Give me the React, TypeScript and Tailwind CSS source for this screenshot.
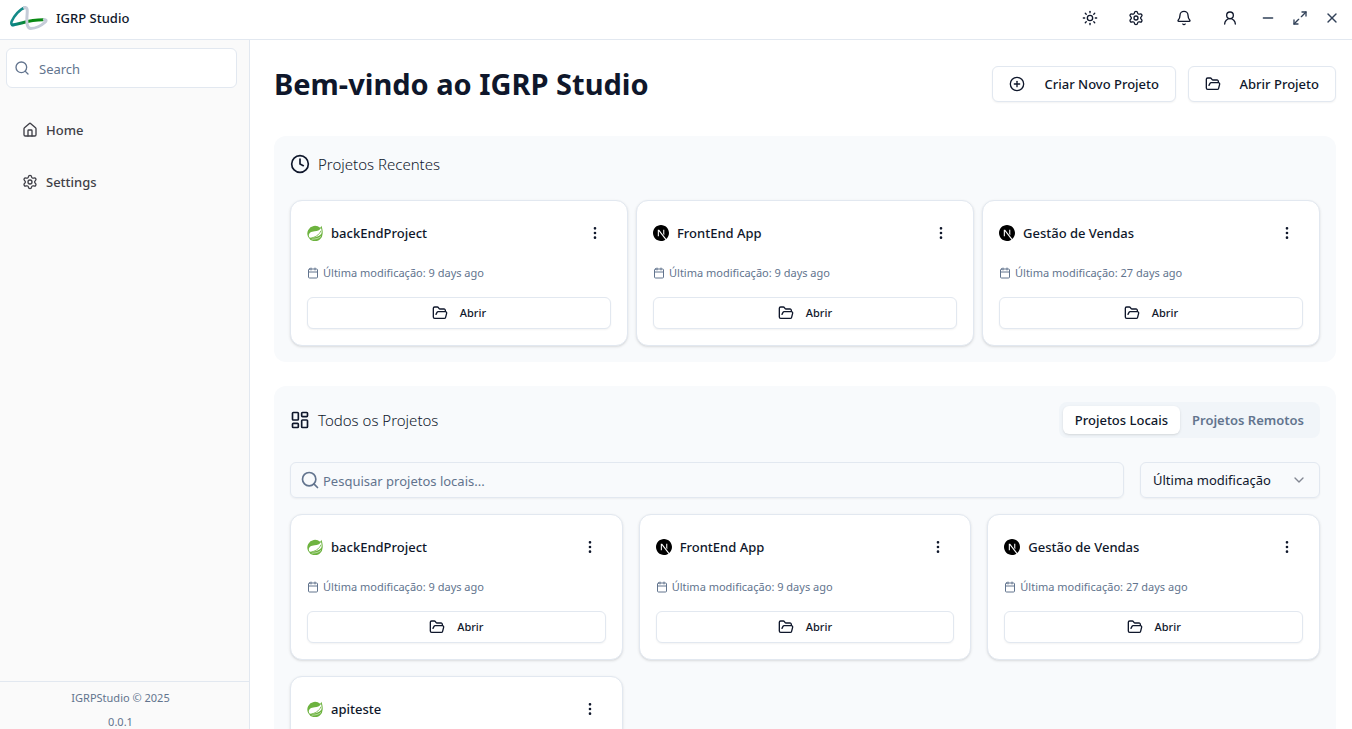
import React from "react";
import {
  Bell,
  Calendar,
  ChevronDown,
  CirclePlus,
  Clock,
  EllipsisVertical,
  FolderOpen,
  House,
  LayoutDashboard,
  Maximize2,
  Minus,
  Search,
  Settings,
  Sun,
  UserRound,
  X,
} from "lucide-react";
import { SiNextdotjs } from "react-icons/si";

type Project = { name: string; kind: "spring" | "next"; modified: string };

const recent: Project[] = [
  { name: "backEndProject", kind: "spring", modified: "9 days ago" },
  { name: "FrontEnd App", kind: "next", modified: "9 days ago" },
  { name: "Gestão de Vendas", kind: "next", modified: "27 days ago" },
];

const all: Project[] = [
  ...recent,
  { name: "apiteste", kind: "spring", modified: "27 days ago" },
];

function Logo() {
  return (
    <svg viewBox="0 0 40 26" className="h-[26px] w-10" fill="none" strokeLinecap="round" strokeLinejoin="round" aria-hidden="true">
      <defs>
        <linearGradient id="logo-stroke" x1="2" y1="0" x2="20" y2="0" gradientUnits="userSpaceOnUse">
          <stop offset="0.3" stopColor="#0b8580" />
          <stop offset="1" stopColor="#0a8a14" />
        </linearGradient>
      </defs>
      <path d="M17 2.500C12 3.800 6 11 3.600 16.500C2.800 19 3.400 20.300 6 20" stroke="#148a88" strokeWidth="2.600" />
      <path d="M4.500 20C13 19 20 14.800 35 14.800" stroke="url(#logo-stroke)" strokeWidth="3" />
      <path d="M16.500 2.500C20 2 19.300 6.500 19 11C18.500 18 19 23.400 22.800 23.400C28 23.400 34 20 37.300 17C38.700 15.500 38 14.500 36.300 14.500" stroke="#c5ccd8" strokeWidth="3" />
    </svg>
  );
}

function SpringIcon() {
  return (
    <svg viewBox="0 0 48 48" className="size-4" fill="none" aria-hidden="true">
      <path d="M43 2C42 5 41 7 39.500 8.500A23 23 0 1 0 47 25C47.500 17 46 9 43 2Z" fill="#6db33f" />
      <path d="M42 9C38 16 31 18 23 18.500C12 19 5 24 5.500 32C6 36 8 38 11 39C25 38 37 34 42.500 27C45 22 44 15 42 9Z" fill="#fff" />
      <path d="M9 40C24 37 36 31 42 17" stroke="#6db33f" strokeWidth="2.500" />
      <path d="M14 42.500C26 42.500 36 40 42 34" stroke="#fff" strokeWidth="1.500" />
    </svg>
  );
}

function IconButton({ label, className, children }: { label: string; className: string; children: React.ReactNode }) {
  return (
    <button type="button" aria-label={label} className={`flex h-8 items-center justify-center ${className}`}>
      {children}
    </button>
  );
}

function ProjectCard({ project }: { project: Project }) {
  return (
    <article className="flex flex-col gap-4 rounded-xl border border-slate-200 bg-white p-4 shadow-sm">
      <div className="flex h-8 items-center justify-between">
        <div className="flex items-center gap-2">
          {project.kind === "spring" ? <SpringIcon /> : <SiNextdotjs className="size-4 text-black" />}
          <h3 className="text-[13px] leading-5 font-medium">{project.name}</h3>
        </div>
        <IconButton label={`Opções de ${project.name}`} className="w-8">
          <EllipsisVertical className="size-4" />
        </IconButton>
      </div>
      <p className="flex h-4 items-center gap-1 text-[11px] leading-4 text-slate-500">
        <Calendar className="size-3" />
        Última modificação: {project.modified}
      </p>
      <button type="button" className="flex h-8 items-center justify-center gap-3 rounded-md border border-slate-200 bg-white text-[11px] leading-4 font-medium shadow-xs">
        <FolderOpen className="size-4" />
        Abrir
      </button>
    </article>
  );
}

export default function App() {
  return (
    <div className="flex h-screen flex-col overflow-hidden bg-white font-['Noto_Sans','Open_Sans',sans-serif] text-slate-900">
      <header className="flex h-10 shrink-0 items-center justify-between border-b border-slate-200 pr-1 pb-1 pl-2">
        <div className="flex items-center gap-2 text-[13px] leading-5 font-medium">
          <Logo />
          IGRP Studio
        </div>
        <div className="flex items-center">
          <IconButton label="Tema" className="w-11"><Sun className="size-4" /></IconButton>
          <IconButton label="Definições" className="w-12"><Settings className="size-4" /></IconButton>
          <IconButton label="Notificações" className="w-12"><Bell className="size-4" /></IconButton>
          <IconButton label="Conta" className="w-11"><UserRound className="size-4" /></IconButton>
          <IconButton label="Minimizar" className="w-8 text-slate-700"><Minus className="size-4" /></IconButton>
          <IconButton label="Maximizar" className="w-8 text-slate-700"><Maximize2 className="size-4" /></IconButton>
          <IconButton label="Fechar" className="w-8 text-slate-700"><X className="size-4" /></IconButton>
        </div>
      </header>

      <div className="flex min-h-0 flex-1">
        <aside className="flex w-[250px] shrink-0 flex-col border-r border-slate-200 bg-[#fafafa]">
          <div className="pt-2 pr-3 pl-1.5">
            <label className="flex h-10 items-center gap-[9px] rounded-md border border-slate-200 bg-white px-[7px] text-slate-500">
              <Search className="size-4 shrink-0" />
              <input type="text" aria-label="Search" placeholder="Search" className="h-full w-full min-w-0 bg-transparent pt-0.5 text-[13px] leading-5 outline-none placeholder:text-slate-500" />
            </label>
          </div>
          <nav className="flex flex-col gap-3 px-1.5 pt-[22px] text-[13px] leading-5 font-medium text-zinc-700">
            <a href="#home" className="flex h-10 items-center gap-2 px-4">
              <House className="size-4" />
              Home
            </a>
            <a href="#settings" className="flex h-10 items-center gap-2 px-4">
              <Settings className="size-4" />
              Settings
            </a>
          </nav>
          <footer className="mt-auto flex h-12 flex-col items-center gap-2 border-t border-slate-200 pt-2 pr-2 text-[11px] leading-4 text-slate-500">
            <p>IGRPStudio © 2025</p>
            <p>0.0.1</p>
          </footer>
        </aside>

        <main className="min-w-0 flex-1 overflow-hidden pt-6 pr-4 pl-6">
          <div className="mb-8 flex h-10 items-center justify-between">
            <h1 className="text-[29px] leading-9 font-bold">Bem-vindo ao IGRP Studio</h1>
            <div className="flex gap-3 text-[13px] leading-5 font-medium">
              <button type="button" className="flex h-9 min-w-[184px] items-center justify-between gap-4 rounded-md border border-slate-200 bg-white px-4 shadow-xs">
                <CirclePlus className="size-4" />
                Criar Novo Projeto
              </button>
              <button type="button" className="flex h-9 min-w-[148px] items-center justify-between gap-4 rounded-md border border-slate-200 bg-white px-4 shadow-xs">
                <FolderOpen className="size-4" />
                Abrir Projeto
              </button>
            </div>
          </div>

          <section className="mb-6 rounded-xl bg-slate-50 p-4">
            <h2 className="mb-6 flex h-6 items-center gap-2 text-[15px] font-light">
              <Clock className="size-5" />
              Projetos Recentes
            </h2>
            <div className="grid grid-cols-3 gap-2">
              {recent.map((p) => <ProjectCard key={p.name} project={p} />)}
            </div>
          </section>

          <section className="rounded-xl bg-slate-50 p-4">
            <div className="mb-6 flex items-center justify-between">
              <h2 className="flex items-center gap-2 text-[15px] font-light">
                <LayoutDashboard className="size-5" />
                Todos os Projetos
              </h2>
              <div role="tablist" className="flex h-9 items-center rounded-lg bg-slate-100 p-1 text-[13px] leading-5">
                <button type="button" role="tab" aria-selected="true" className="h-7 rounded-md bg-white px-3 font-medium shadow-sm">Projetos Locais</button>
                <button type="button" role="tab" aria-selected="false" className="h-7 px-3 font-semibold text-slate-500">Projetos Remotos</button>
              </div>
            </div>
            <div className="mb-4 flex gap-4">
              <label className="flex h-9 flex-1 items-center gap-[3px] rounded-md border border-slate-200 px-[9px] text-slate-500 shadow-xs">
                <Search className="size-5 shrink-0" />
                <input type="text" aria-label="Pesquisar projetos locais" placeholder="Pesquisar projetos locais..." className="h-full w-full min-w-0 bg-transparent pt-0.5 text-[13px] leading-5 outline-none placeholder:text-slate-500" />
              </label>
              <label className="grid h-9 w-[180px] items-center rounded-md border border-slate-200 shadow-xs">
                <select aria-label="Ordenar por" className="col-start-1 row-start-1 h-full w-full appearance-none bg-transparent px-3 text-[13px] leading-5 outline-none">
                  <option>Última modificação</option>
                  <option>Nome</option>
                </select>
                <ChevronDown className="pointer-events-none col-start-1 row-start-1 mr-3 size-4 justify-self-end text-slate-900 opacity-50" />
              </label>
            </div>
            <div className="grid grid-cols-3 gap-4">
              {all.map((p) => <ProjectCard key={p.name} project={p} />)}
            </div>
          </section>
        </main>
      </div>
    </div>
  );
}
